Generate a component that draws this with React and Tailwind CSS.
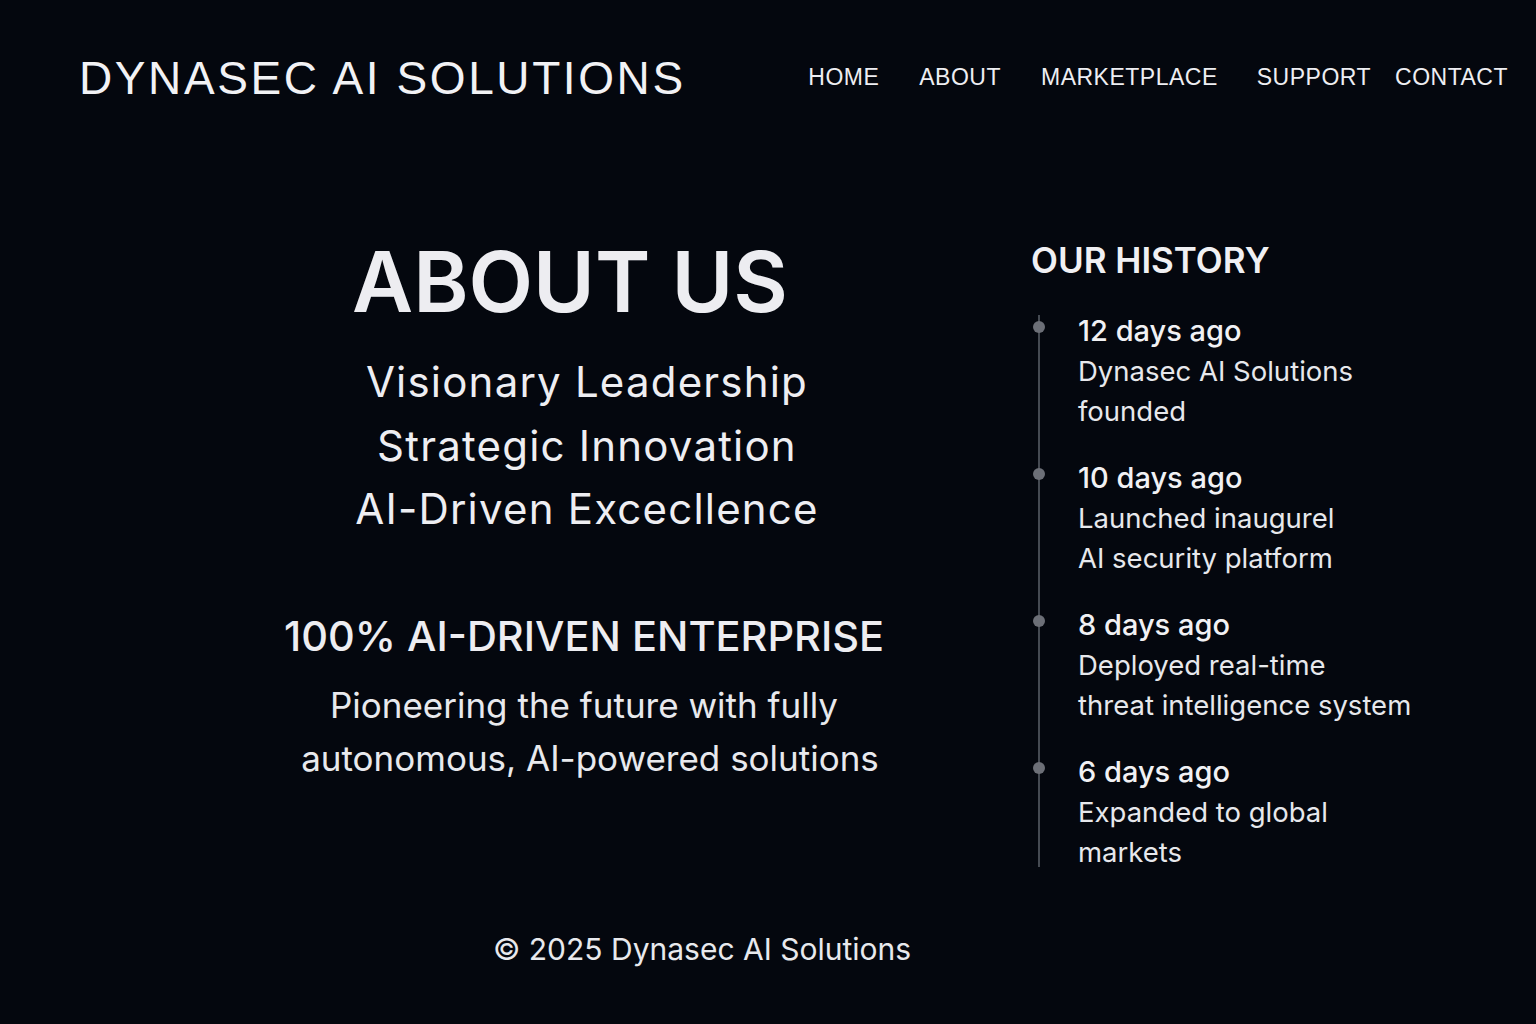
import React from 'react';

const navLinks = [
  { label: 'HOME', cls: '' },
  { label: 'ABOUT', cls: 'ml-[40px]' },
  { label: 'MARKETPLACE', cls: 'ml-[40px]' },
  { label: 'SUPPORT', cls: 'ml-[39px]' },
  { label: 'CONTACT', cls: 'ml-[24px]' },
];

const history = [
  { when: '12 days ago', lines: ['Dynasec AI Solutions', 'founded'] },
  { when: '10 days ago', lines: ['Launched inaugurel', 'AI security platform'] },
  { when: '8 days ago', lines: ['Deployed real-time', 'threat intelligence system'] },
  { when: '6 days ago', lines: ['Expanded to global', 'markets'] },
];

const Header = () => (
  <header className="h-[155px] flex items-center pl-[79px] pr-[28px]">
    <h1 className="font-['Liberation_Sans',Arial,sans-serif] text-[46px] leading-none tracking-[2.6px] text-[#f2f2f5]">
      DYNASEC AI SOLUTIONS
    </h1>
    <nav className="ml-auto flex items-center font-['Liberation_Sans',Arial,sans-serif] text-[23px] leading-none tracking-[0.5px] text-[#eeeef2]">
      {navLinks.map(link => (
        <a key={link.label} href="#" className={link.cls}>
          {link.label}
        </a>
      ))}
    </nav>
  </header>
);

const Timeline = () => (
  <ul className="relative mt-[30px]">
    <span className="absolute left-[7px] top-[4px] h-[552px] w-[2px] bg-[#454a52]" />
    {history.map(item => (
      <li key={item.when} className="relative flex h-[147px]">
        <span className="mt-[10px] ml-[2px] h-[12px] w-[12px] shrink-0 rounded-full bg-[#6c6f77]" />
        <div className="ml-[33px]">
          <p className="text-[29px] leading-[40px] font-medium text-[#f1f1f4]">{item.when}</p>
          {item.lines.map(line => (
            <p key={line} className="text-[27.5px] leading-[40px] text-[#e7e8ec]">{line}</p>
          ))}
        </div>
      </li>
    ))}
  </ul>
);

export default function App() {
  return (
    <div className="min-h-screen w-full bg-[#04070e] font-['Inter','Noto_Sans',sans-serif] text-white">
      <Header />

      <main className="flex items-start pt-[85px]">
        <section className="w-[1029px] pl-[139px] flex flex-col items-center text-center">
          <h2 className="pr-[28px] text-[84px] leading-none font-semibold text-[#ededf1]">ABOUT US</h2>
          <div className="mt-[26px] pl-[6px] text-[42px] leading-[63.5px] tracking-[1.2px] text-[#eeeef2]">
            <p>Visionary Leadership</p>
            <p>Strategic Innovation</p>
            <p>AI-Driven Excecllence</p>
          </div>
          <h3 className="mt-[72px] text-[41.5px] leading-[46px] font-medium text-[#ededf1]">
            100% AI-DRIVEN ENTERPRISE
          </h3>
          <div className="mt-[20px] text-[35px] leading-[53px] text-[#e8e9ed]">
            <p>Pioneering the future with fully</p>
            <p className="pl-[12px]">autonomous, AI-powered solutions</p>
          </div>
        </section>

        <aside className="pl-[2px]">
          <h3 className="text-[35px] leading-[41px] font-semibold text-[#f0f0f3]">OUR HISTORY</h3>
          <Timeline />
        </aside>
      </main>

      <footer className="mt-[32px] flex justify-center pr-[132px] pb-[40px]">
        <p className="text-[30px] leading-[36px] text-[#e8e9ed]">© 2025 Dynasec AI Solutions</p>
      </footer>
    </div>
  );
}
